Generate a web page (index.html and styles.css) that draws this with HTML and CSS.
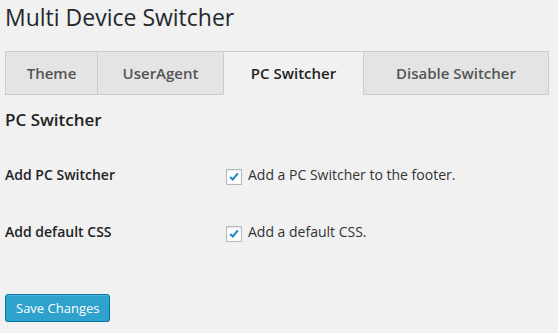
FILE: index.html
```html
<!DOCTYPE html>
<html lang="en">
<head>
<meta charset="utf-8">
<title>Multi Device Switcher</title>
<link rel="stylesheet" href="styles.css">
</head>
<body>
<div class="wrap">
  <h1 class="page-title">Multi Device Switcher</h1>
  <nav class="tabs">
    <a class="tab tab-theme">Theme</a>
    <a class="tab tab-ua">UserAgent</a>
    <a class="tab tab-pc is-active">PC Switcher</a>
    <a class="tab tab-disable">Disable Switcher</a>
  </nav>
  <h2 class="section-title">PC Switcher</h2>
  <div class="form-table">
    <div class="form-row">
      <div class="form-label">Add PC Switcher</div>
      <label class="form-field">
        <span class="checkbox"><svg viewBox="0 0 16 16" width="16" height="16"><path d="M3.6 7.9 L6.6 10.8 L12.4 3.9" fill="none" stroke="#1e8cbe" stroke-width="2.4" stroke-linecap="butt" stroke-linejoin="miter"/></svg></span>
        Add a PC Switcher to the footer.
      </label>
    </div>
    <div class="form-row">
      <div class="form-label">Add default CSS</div>
      <label class="form-field">
        <span class="checkbox"><svg viewBox="0 0 16 16" width="16" height="16"><path d="M3.6 7.9 L6.6 10.8 L12.4 3.9" fill="none" stroke="#1e8cbe" stroke-width="2.4" stroke-linecap="butt" stroke-linejoin="miter"/></svg></span>
        Add a default CSS.
      </label>
    </div>
  </div>
  <div class="submit">
    <button class="button-primary" type="button">Save Changes</button>
  </div>
</div>
</body>
</html>
```
FILE: styles.css
```css
html, body {
  margin: 0;
  padding: 0;
  background: #f1f1f1;
}
body {
  font-family: "Open Sans", "Liberation Sans", sans-serif;
  color: #444;
  font-size: 13px;
}
.wrap {
  padding: 0 5px;
}
.page-title {
  margin: 3px 0 0 0;
  font-size: 23px;
  font-weight: 400;
  line-height: 29px;
  color: #23282d;
}
.tabs {
  display: flex;
  margin-top: 19px;
}
.tab {
  box-sizing: border-box;
  height: 44px;
  line-height: 42px;
  border: 1px solid #ccc;
  background: #e4e4e4;
  color: #555;
  font-size: 15px;
  font-weight: 600;
  text-align: center;
  text-decoration: none;
}
.tab + .tab {
  margin-left: -1px;
}
.tab-theme { width: 93px; }
.tab-ua { width: 127px; }
.tab-pc { width: 141px; }
.tab-disable { width: 186px; }
.tab.is-active {
  background: #f1f1f1;
  border-bottom-color: #f1f1f1;
  color: #222;
}
.section-title {
  margin: 14px 0 0 0;
  font-size: 17px;
  font-weight: 600;
  line-height: 22px;
  color: #222;
}
.form-table {
  margin-top: 16px;
}
.form-row {
  display: grid;
  grid-template-columns: 220px 1fr;
  align-items: start;
}
.form-label {
  padding: 19px 0;
  font-size: 14px;
  font-weight: 600;
  line-height: 18px;
  color: #222;
}
.form-field {
  padding: 19px 0;
  font-size: 14px;
  line-height: 18px;
  color: #333;
  display: flex;
  align-items: flex-start;
}
.checkbox {
  box-sizing: border-box;
  width: 16px;
  height: 16px;
  margin: 3px 6px 0 1px;
  border: 1px solid #b4b9be;
  background: #fff;
  box-shadow: inset 0 1px 2px rgba(0,0,0,.1);
  display: flex;
  align-items: center;
  justify-content: center;
  flex: none;
}
.checkbox svg {
  display: block;
  width: 14px;
  height: 14px;
}
.submit {
  margin-top: 33px;
}
.button-primary {
  box-sizing: border-box;
  height: 28px;
  padding: 0 10px 1px;
  white-space: nowrap;
  font-family: "Open Sans", "Liberation Sans", sans-serif;
  font-size: 13px;
  line-height: 26px;
  color: #fff;
  background: #2ea2cc;
  border: 1px solid #0074a2;
  border-radius: 3px;
  box-shadow: inset 0 1px 0 rgba(120,200,230,.5), 0 1px 0 rgba(0,0,0,.15);
  cursor: pointer;
}
```
